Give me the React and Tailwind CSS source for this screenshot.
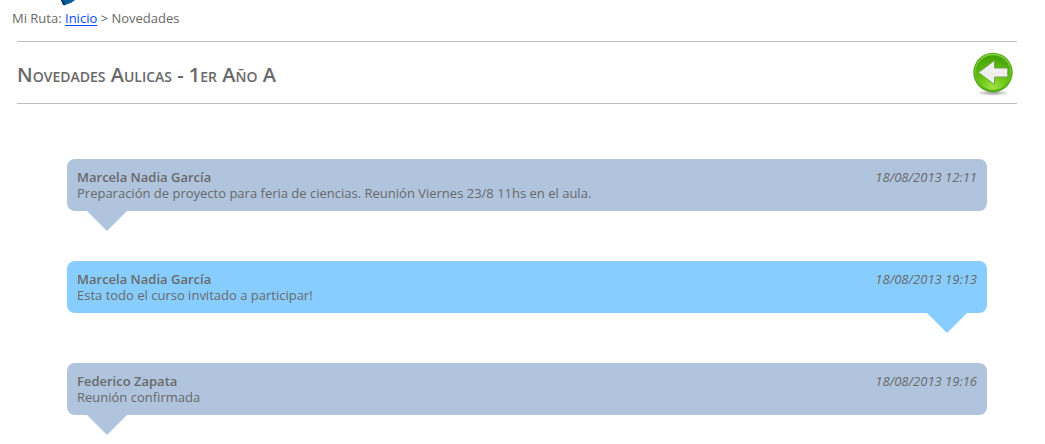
import React, { useId } from "react";

const messages = [
  {
    author: "Marcela Nadia García",
    date: "18/08/2013 12:11",
    text: "Preparación de proyecto para feria de ciencias. Reunión Viernes 23/8 11hs en el aula.",
    own: false,
  },
  {
    author: "Marcela Nadia García",
    date: "18/08/2013 19:13",
    text: "Esta todo el curso invitado a participar!",
    own: true,
  },
  {
    author: "Federico Zapata",
    date: "18/08/2013 19:16",
    text: "Reunión confirmada",
    own: false,
  },
];

function LogoTip() {
  return (
    <svg className="ml-[60px] block h-[6px] w-[20px]" viewBox="0 0 20 6" aria-hidden="true">
      <path d="M1 0H15L12 2.2L8 4L4.5 5.2L3 4.8Z" fill="#0b5c9b" />
      <path d="M1 0H3L5.5 4.5L4 5.2L3 4.8Z" fill="#063c6b" />
    </svg>
  );
}

function BackIcon() {
  const id = useId();
  return (
    <svg className="block h-[48px] w-[48px]" viewBox="0 0 48 48" aria-hidden="true">
      <defs>
        <radialGradient id={`${id}disc`} cx="0.5" cy="0.95" r="0.9">
          <stop offset="0" stopColor="#a4e545" />
          <stop offset="0.45" stopColor="#6cc516" />
          <stop offset="1" stopColor="#45a309" />
        </radialGradient>
        <radialGradient id={`${id}shade`}>
          <stop offset="0" stopColor="#333" stopOpacity="0.5" />
          <stop offset="1" stopColor="#333" stopOpacity="0" />
        </radialGradient>
        <linearGradient id={`${id}ring`} x1="0" y1="0" x2="0" y2="1">
          <stop offset="0" stopColor="#83d440" />
          <stop offset="1" stopColor="#58b713" />
        </linearGradient>
      </defs>
      <ellipse cx="24" cy="44" rx="17" ry="3" fill={`url(#${id}shade)`} />
      <circle cx="24" cy="23.5" r="19.7" fill="#4ba311" />
      <circle cx="24" cy="23.5" r="18" fill={`url(#${id}disc)`} stroke={`url(#${id}ring)`} strokeWidth="1.4" />
      <path
        d="M9.5 23.5L25.5 11.5V19H38.8V28H25.5V35.5Z"
        fill="#efefef"
        stroke="#75a34d"
        strokeWidth="1"
        strokeLinejoin="round"
      />
    </svg>
  );
}

function Bubble({ author, date, text, own }) {
  return (
    <article className={own ? "text-[#87cdff]" : "text-[#b0c4de]"}>
      <div className="rounded-lg bg-current p-[10px]">
        <div className="flex justify-between text-[#696969]">
          <h2 className="font-semibold">{author}</h2>
          <time className="italic">{date}</time>
        </div>
        <p className="text-[#696969]">{text}</p>
      </div>
      <svg
        className={own ? "mr-5 ml-auto block h-5 w-10" : "ml-5 block h-5 w-10"}
        viewBox="0 0 40 20"
        aria-hidden="true"
      >
        <path d="M0 0H40L20 20Z" fill="currentColor" />
      </svg>
    </article>
  );
}

export default function App() {
  return (
    <div className="bg-white font-['Open_Sans','Noto_Sans',sans-serif] text-[13px] leading-4 text-[#696969]">
      <LogoTip />
      <nav aria-label="Mi Ruta" className="mt-1 ml-3">
        Mi Ruta:{" "}
        <a href="#inicio" className="text-[#034af3] underline underline-offset-2">
          Inicio
        </a>{" "}
        &gt; Novedades
      </nav>
      <main className="mr-7 ml-[17px]">
        <header className="mt-[15px] flex h-[63px] items-center justify-between border-y border-[#bfbfbf]">
          <h1 className="pt-1 text-[20px] leading-6 font-semibold [font-variant:small-caps]">
            Novedades Aulicas - 1er Año A
          </h1>
          <a href="#volver" aria-label="Volver">
            <BackIcon />
          </a>
        </header>
        <section aria-label="Novedades" className="mr-[30px] ml-[50px] mt-[55px] flex flex-col gap-[30px]">
          {messages.map((m) => (
            <Bubble key={m.date} {...m} />
          ))}
        </section>
      </main>
    </div>
  );
}
